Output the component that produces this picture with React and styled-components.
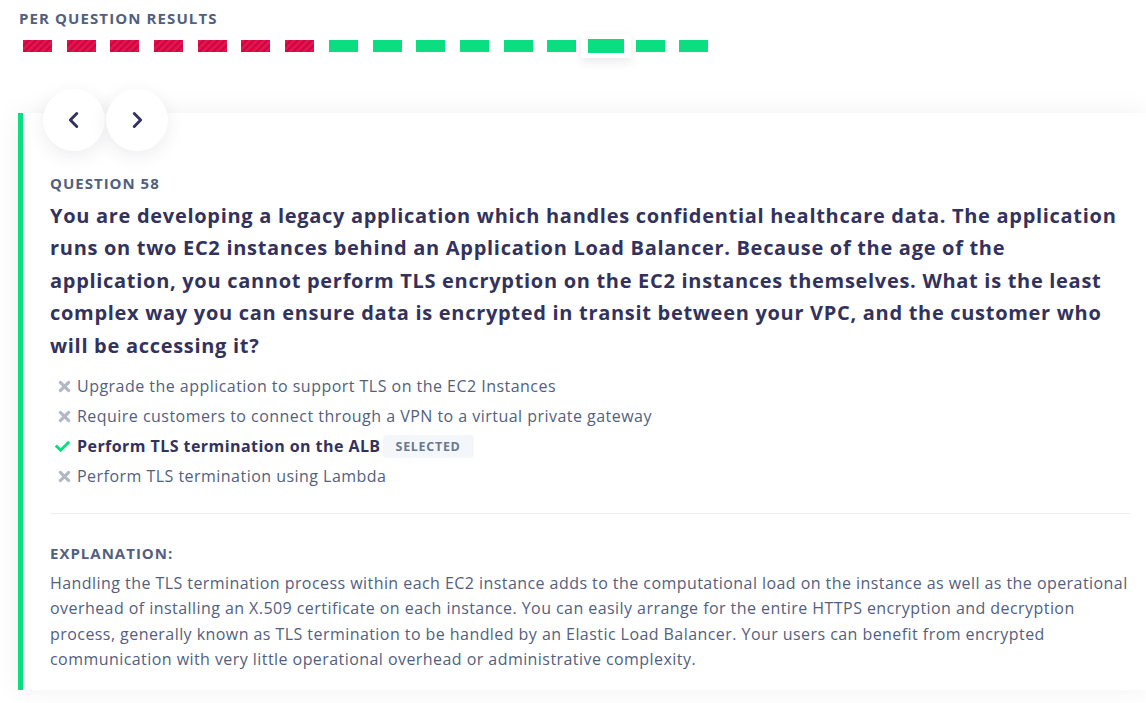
import React from "react";
import styled, { createGlobalStyle } from "styled-components";
import { FaTimes, FaCheck } from "react-icons/fa";

const results = [
  "wrong", "wrong", "wrong", "wrong", "wrong", "wrong", "wrong",
  "right", "right", "right", "right", "right", "right", "right", "right", "right",
];
const currentIndex = 13;

const options = [
  { text: "Upgrade the application to support TLS on the EC2 Instances", correct: false },
  { text: "Require customers to connect through a VPN to a virtual private gateway", correct: false },
  { text: "Perform TLS termination on the ALB", correct: true, selected: true },
  { text: "Perform TLS termination using Lambda", correct: false },
];

function App() {
  return (
    <Page>
      <GlobalStyle />
      <SectionTitle>Per Question Results</SectionTitle>
      <ResultsRow>
        {results.map((r, i) =>
          i === currentIndex ? (
            <CurrentSlot key={i}>
              <ResultBar $status={r} $big />
            </CurrentSlot>
          ) : (
            <ResultBar key={i} $status={r} />
          )
        )}
      </ResultsRow>

      <Card>
        <NavRow>
          <NavButton type="button" aria-label="previous">
            <Chevron viewBox="0 0 24 24">
              <path d="M15 5 L8 12 L15 19" />
            </Chevron>
          </NavButton>
          <NavButton type="button" aria-label="next">
            <Chevron viewBox="0 0 24 24">
              <path d="M9 5 L16 12 L9 19" />
            </Chevron>
          </NavButton>
        </NavRow>

        <Label>Question 58</Label>
        <QuestionText>
          You are developing a legacy application which handles confidential healthcare data. The application
          runs on two EC2 instances behind an Application Load Balancer. Because of the age of the
          application, you cannot perform TLS encryption on the EC2 instances themselves. What is the least
          complex way you can ensure data is encrypted in transit between your VPC, and the customer who
          will be accessing it?
        </QuestionText>

        <OptionList>
          {options.map((o) => (
            <Option key={o.text} $correct={o.correct}>
              <OptionIcon $correct={o.correct}>
                {o.correct ? <FaCheck /> : <FaTimes />}
              </OptionIcon>
              <span>{o.text}</span>
              {o.selected && <Badge>Selected</Badge>}
            </Option>
          ))}
        </OptionList>

        <Divider />

        <Label $afterRule>Explanation:</Label>
        <Explanation>
          Handling the TLS termination process within each EC2 instance adds to the computational load on the
          instance as well as the operational overhead of installing an X.509 certificate on each instance. You
          can easily arrange for the entire HTTPS encryption and decryption process, generally known as TLS
          termination to be handled by an Elastic Load Balancer. Your users can benefit from encrypted
          communication with very little operational overhead or administrative complexity.
        </Explanation>
      </Card>
    </Page>
  );
}

export default App;

const GlobalStyle = createGlobalStyle`
  html, body {
    margin: 0;
    padding: 0;
    background: #ffffff;
  }
  body {
    font-family: "Open Sans", "Noto Sans", "Liberation Sans", sans-serif;
    -webkit-font-smoothing: antialiased;
  }
`;

const Page = styled.div`
  padding: 8px 0 14px 18px;
  overflow: hidden;
`;

const SectionTitle = styled.div`
  font-size: 15px;
  line-height: 20px;
  font-weight: 700;
  color: #525f7f;
  text-transform: uppercase;
  letter-spacing: 1.1px;
  padding-left: 1px;
`;

const ResultsRow = styled.div`
  display: flex;
  align-items: center;
  gap: 14.7px;
  height: 24px;
  margin-top: 6px;
  padding-left: 5px;
`;

const ResultBar = styled.div`
  flex: none;
  width: ${(p) => (p.$big ? "36px" : "29px")};
  height: ${(p) => (p.$big ? "14px" : "12px")};
  background: ${(p) =>
    p.$status === "wrong"
      ? "repeating-linear-gradient(135deg, #e8104d 0 3px, #c70b42 3px 5px)"
      : "#0bdd81"};
`;

const CurrentSlot = styled.div`
  flex: none;
  margin: 0 -10px;
  padding: 5px 7px;
  background: #fff;
  box-shadow: 0 4px 10px rgba(50, 50, 93, 0.1);
`;

const Card = styled.div`
  display: flow-root;
  margin-top: 55px;
  background: #fff;
  border-left: 5px solid #0bdd81;
  box-shadow: 0 0 26px rgba(0, 0, 0, 0.06);
  padding: 0 16px 18px 27px;
`;

const NavRow = styled.div`
  display: flex;
  margin: -24px 0 0 -7px;
`;

const NavButton = styled.button`
  width: 62px;
  height: 62px;
  border-radius: 50%;
  border: none;
  background: #fff;
  box-shadow: 0 5px 18px rgba(50, 50, 93, 0.09);
  display: flex;
  align-items: center;
  justify-content: center;
  padding: 0;
  margin-right: 1px;
  cursor: pointer;
`;

const Chevron = styled.svg`
  width: 22px;
  height: 22px;
  fill: none;
  stroke: #32325d;
  stroke-width: 3.2;
  stroke-linecap: round;
  stroke-linejoin: round;
`;

const Label = styled.div`
  margin-top: ${(p) => (p.$afterRule ? "29px" : "22px")};
  font-size: 15px;
  line-height: 20px;
  font-weight: 700;
  color: #525f7f;
  text-transform: uppercase;
  letter-spacing: 1px;
`;

const QuestionText = styled.div`
  margin-top: 7px;
  font-size: 20px;
  line-height: 32.4px;
  font-weight: 700;
  color: #32325d;
  letter-spacing: 0.7px;
`;

const OptionList = styled.ul`
  list-style: none;
  margin: 9px 0 0;
  padding: 0;
`;

const Option = styled.li`
  display: flex;
  align-items: center;
  height: 30px;
  font-size: 16px;
  color: ${(p) => (p.$correct ? "#32325d" : "#525f7f")};
  font-weight: ${(p) => (p.$correct ? 700 : 400)};
  letter-spacing: ${(p) => (p.$correct ? "0.44px" : "0.47px")};
`;

const OptionIcon = styled.span`
  display: flex;
  width: 27px;
  padding-left: ${(p) => (p.$correct ? "5px" : "6px")};
  box-sizing: border-box;
  font-size: ${(p) => (p.$correct ? "15px" : "17px")};
  color: ${(p) => (p.$correct ? "#0bdd81" : "#b2b8c4")};
`;

const Badge = styled.span`
  margin-left: 2px;
  padding: 4px 13px;
  border-radius: 4px;
  background: #f4f7fa;
  color: #6b7891;
  font-size: 12.5px;
  line-height: 15px;
  font-weight: 700;
  letter-spacing: 0.7px;
  text-transform: uppercase;
`;

const Divider = styled.hr`
  margin: 22px 0 0;
  border: none;
  border-top: 1px solid #eceef2;
`;

const Explanation = styled.p`
  margin: 8px 0 0;
  font-size: 16px;
  line-height: 25.3px;
  color: #525f7f;
  letter-spacing: 0.44px;
`;
